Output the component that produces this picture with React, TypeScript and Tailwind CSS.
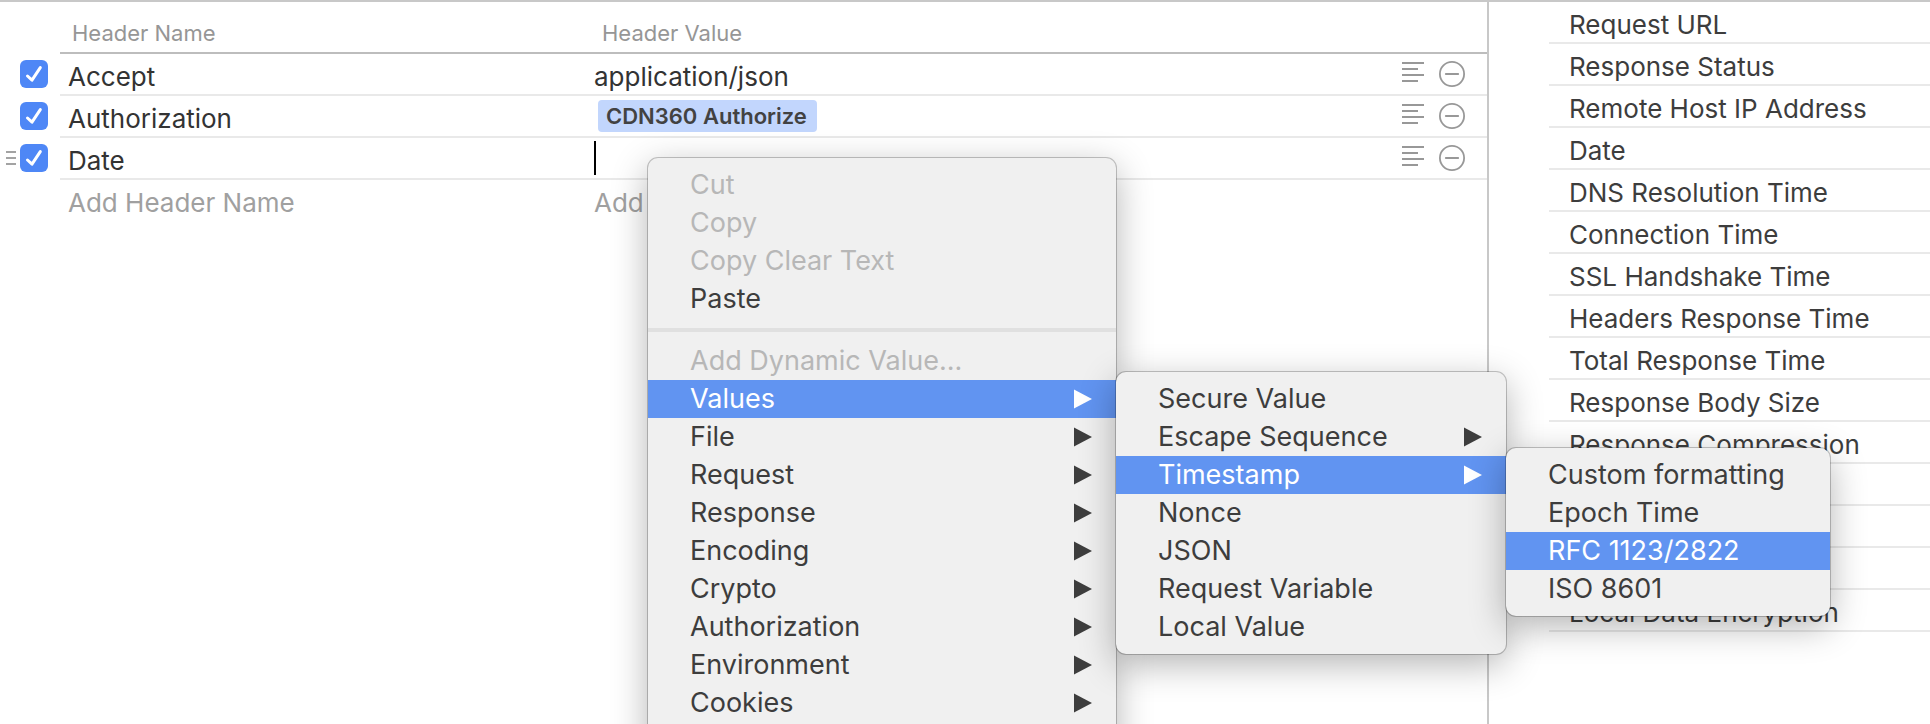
import React from "react";

type MenuEntry = {
  label: string;
  disabled?: boolean;
  active?: boolean;
  arrow?: boolean;
  separatorAfter?: boolean;
  children?: React.ReactNode;
};

const timings = [
  "Request URL",
  "Response Status",
  "Remote Host IP Address",
  "Date",
  "DNS Resolution Time",
  "Connection Time",
  "SSL Handshake Time",
  "Headers Response Time",
  "Total Response Time",
  "Response Body Size",
  "Response Compression",
  "",
  "",
  "",
  "Local Data Encryption",
];

function Arrow() {
  return (
    <svg width="18" height="20" viewBox="0 0 18 20" fill="currentColor" aria-hidden="true">
      <path d="M0 0.5 L18 10 L0 19.5 Z" />
    </svg>
  );
}

function Menu({ entries, label, className }: { entries: MenuEntry[]; label: string; className: string }) {
  return (
    <ul
      role="menu"
      aria-label={label}
      className={
        "absolute rounded-[10px] bg-[#f0f0f0] pt-2 shadow-[0_0_0_1px_rgba(0,0,0,0.22),0_10px_36px_rgba(0,0,0,0.3)] " +
        className
      }
    >
      {entries.map((e) => (
        <li key={e.label} role="none" className="relative">
          <button
            type="button"
            role="menuitem"
            disabled={e.disabled}
            aria-haspopup={e.arrow ? "menu" : undefined}
            className={
              "flex h-[38px] w-full items-center justify-between pr-6 pl-[42px] text-left text-[27px] leading-[38px] whitespace-nowrap " +
              (e.active ? "bg-[#6194f1] text-white" : e.disabled ? "text-[#b7b7b7]" : "text-[#3d3d3d]")
            }
          >
            {e.label}
            {e.arrow && <Arrow />}
          </button>
          {e.separatorAfter && <div role="separator" className="my-[10px] h-1 bg-[#e0e0e0]" />}
          {e.children}
        </li>
      ))}
    </ul>
  );
}

function EnabledBox({ name }: { name: string }) {
  return (
    <label className="relative block size-7">
      <input
        type="checkbox"
        defaultChecked
        aria-label={"Enable " + name}
        className="block size-7 appearance-none rounded-md bg-[#4e87f6]"
      />
      <svg
        className="pointer-events-none absolute inset-0"
        width="28"
        height="28"
        viewBox="0 0 28 28"
        fill="none"
        stroke="white"
        strokeWidth="3"
        strokeLinecap="round"
        strokeLinejoin="round"
        aria-hidden="true"
      >
        <path d="M7.5 16 L12 20.2 L20.3 7.6" />
      </svg>
    </label>
  );
}

function RowActions() {
  return (
    <div className="flex items-center justify-end gap-[15px] pr-[22px] text-[#989898]">
      <button type="button" aria-label="Description">
        <svg className="block" width="22" height="26" viewBox="0 0 22 26" fill="currentColor" aria-hidden="true">
          <path d="M0 1h22v2H0zM0 7h16v2H0zM0 13h22v2H0zM0 19h16v2H0z" />
        </svg>
      </button>
      <button type="button" aria-label="Remove header">
        <svg className="block" width="26" height="26" viewBox="0 0 26 26" fill="none" stroke="currentColor" strokeWidth="1.8" aria-hidden="true">
          <circle cx="13" cy="13" r="12.1" />
          <path d="M6.8 13h12.4" strokeLinecap="round" />
        </svg>
      </button>
    </div>
  );
}

const fieldClass =
  "block h-[34px] w-full bg-transparent text-[26px] leading-[34px] text-[#333333] outline-none placeholder:text-[#a0a0a0]";

function HeaderRow({ name, handle, children }: { name: string; handle?: boolean; children: React.ReactNode }) {
  return (
    <tr className="h-[42px]">
      <td className="border-b-2 border-transparent p-0">
        <div className="flex items-center justify-end gap-1 pr-3">
          {handle && (
            <svg width="10" height="14" viewBox="0 0 10 14" fill="#a3a3a3" aria-hidden="true">
              <path d="M0 0h10v2H0zM0 6h10v2H0zM0 12h10v2H0z" />
            </svg>
          )}
          <EnabledBox name={name} />
        </div>
      </td>
      <td className="border-b-2 border-[#e9e9e9] p-0 pt-[6px] pl-2">
        <input aria-label="Header Name" defaultValue={name} className={fieldClass} />
      </td>
      <td className="border-b-2 border-[#e9e9e9] p-0 pl-2">{children}</td>
      <td className="border-b-2 border-[#e9e9e9] p-0">
        <RowActions />
      </td>
    </tr>
  );
}

export default function App() {
  const timestampMenu = (
    <Menu
      label="Timestamp"
      className="-top-2 left-full w-[324px] pb-2"
      entries={[
        { label: "Custom formatting" },
        { label: "Epoch Time" },
        { label: "RFC 1123/2822", active: true },
        { label: "ISO 8601" },
      ]}
    />
  );

  const valuesMenu = (
    <Menu
      label="Values"
      className="-top-2 left-full w-[390px] pb-2"
      entries={[
        { label: "Secure Value" },
        { label: "Escape Sequence", arrow: true },
        { label: "Timestamp", arrow: true, active: true, children: timestampMenu },
        { label: "Nonce" },
        { label: "JSON" },
        { label: "Request Variable" },
        { label: "Local Value" },
      ]}
    />
  );

  return (
    <div className="relative flex min-h-screen overflow-hidden border-t-2 border-[#c8c8c8] bg-white font-['Inter','Liberation_Sans',sans-serif]">
      <main className="min-w-0 flex-1">
        <table className="w-full table-fixed border-separate border-spacing-0">
          <colgroup>
            <col className="w-[60px]" />
            <col className="w-[526px]" />
            <col />
            <col className="w-[100px]" />
          </colgroup>
          <thead>
            <tr className="text-left text-[22px] leading-[38px] text-[#969696]">
              <td className="p-0" />
              <th scope="col" className="border-b-2 border-[#bdbdbd] p-0 pt-3 pl-3 font-normal">
                Header Name
              </th>
              <th scope="col" className="border-b-2 border-[#bdbdbd] p-0 pt-3 pl-4 font-normal">
                Header Value
              </th>
              <td className="border-b-2 border-[#bdbdbd] p-0" />
            </tr>
          </thead>
          <tbody>
            <HeaderRow name="Accept">
              <div className="pt-[6px]">
                <input aria-label="Accept value" defaultValue="application/json" className={fieldClass} />
              </div>
            </HeaderRow>
            <HeaderRow name="Authorization">
              <span className="ml-1 block h-8 w-fit rounded bg-[#c2d6fd] pr-[10px] pl-2 text-[22px] leading-8 font-semibold text-[#424242]">
                CDN360 Authorize
              </span>
            </HeaderRow>
            <HeaderRow name="Date" handle>
              <span className="block h-[34px] w-[2px] bg-black" />
            </HeaderRow>
            <tr className="h-[42px]">
              <td className="p-0" />
              <td className="p-0 pt-1 pl-2">
                <input aria-label="New header name" placeholder="Add Header Name" className={fieldClass} />
              </td>
              <td className="p-0 pt-1 pl-2">
                <input aria-label="New header value" placeholder="Add Header Value" className={fieldClass} />
              </td>
              <td className="p-0" />
            </tr>
          </tbody>
        </table>
      </main>

      <aside className="w-[443px] border-l-2 border-[#c8c8c8] pl-[60px]">
        <ul>
          {timings.map((t, i) => (
            <li
              key={i}
              className="h-[42px] border-b-2 border-[#e9e9e9] pt-[6px] pl-5 text-[26px] leading-[34px] whitespace-nowrap text-[#3d3d3d]"
            >
              {t}
            </li>
          ))}
        </ul>
      </aside>

      <Menu
        label="Edit"
        className="top-[156px] left-[648px] w-[468px] pb-8"
        entries={[
          { label: "Cut", disabled: true },
          { label: "Copy", disabled: true },
          { label: "Copy Clear Text", disabled: true },
          { label: "Paste", separatorAfter: true },
          { label: "Add Dynamic Value...", disabled: true },
          { label: "Values", arrow: true, active: true, children: valuesMenu },
          { label: "File", arrow: true },
          { label: "Request", arrow: true },
          { label: "Response", arrow: true },
          { label: "Encoding", arrow: true },
          { label: "Crypto", arrow: true },
          { label: "Authorization", arrow: true },
          { label: "Environment", arrow: true },
          { label: "Cookies", arrow: true },
        ]}
      />
    </div>
  );
}
